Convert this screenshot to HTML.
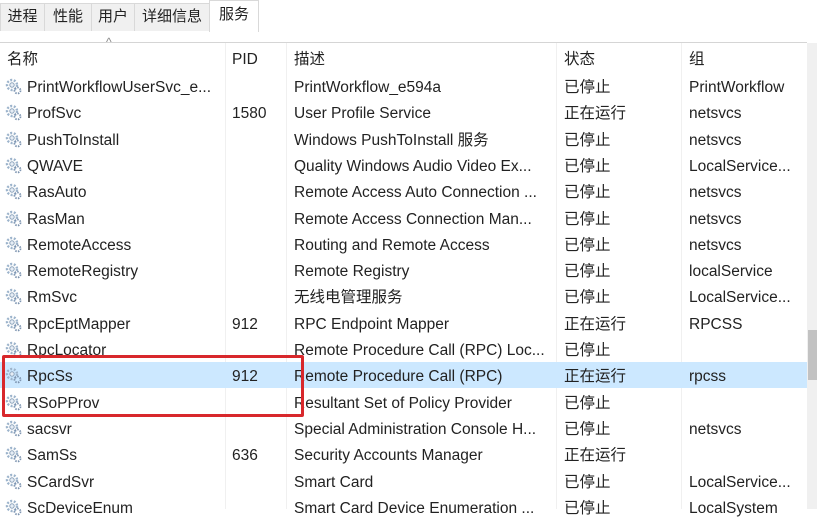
<!DOCTYPE html>
<html><head><meta charset="utf-8"><style>
body{margin:0;width:817px;height:509px;overflow:hidden;background:#fff;font-family:"Liberation Sans","Noto Sans CJK SC",sans-serif;color:#222;position:relative;font-size:15.5px}
.a{position:absolute;white-space:nowrap;height:26px;line-height:26px}
.tabs{position:absolute;left:0;top:0;width:817px;height:31px;background:#fff}
.tab{position:absolute;top:3px;height:27px;background:#f0f0f0;border:1px solid #d9d9d9;border-bottom:none;font-size:15px;line-height:25px;text-align:center;color:#222}
.hdr{position:absolute;left:0;top:42px;width:807px;height:1px;background:#d5d5d5}
.vl{position:absolute;top:43px;width:1px;height:466px;background:#f0f0f0}
.row{position:absolute;left:0;width:807px;height:26px}
.gear{position:absolute;left:5px;width:17px;height:17px}
.sb{position:absolute;left:807px;top:43px;width:10px;height:466px;background:#f0f0f0}
</style></head><body>
<div class="tabs">
<div class="tab" style="left:0;width:43px">进程</div>
<div class="tab" style="left:44px;width:46px">性能</div>
<div class="tab" style="left:91px;width:42px">用户</div>
<div class="tab" style="left:134px;width:74px">详细信息</div>
<div class="tab" style="left:209px;width:48px;top:0;height:31px;background:#fff;line-height:28px">服务</div>
</div>
<div class="a" style="left:106px;top:35px;font-size:12px;color:#888;height:14px;line-height:14px">^</div>
<div class="hdr"></div>
<div class="vl" style="left:225px"></div>
<div class="vl" style="left:286px"></div>
<div class="vl" style="left:556px"></div>
<div class="vl" style="left:681px"></div>
<div class="a" style="left:7px;top:47px">名称</div>
<div class="a" style="left:232px;top:47px">PID</div>
<div class="a" style="left:294px;top:47px">描述</div>
<div class="a" style="left:564px;top:47px">状态</div>
<div class="a" style="left:689px;top:47px">组</div>
<div class="row" style="top:362px;background:#cce8ff"></div>
<div id="rows"></div>
<div class="sb"><div style="position:absolute;left:1px;top:287px;width:9px;height:50px;background:#c2c2c2"></div></div>
<div class="a" style="left:2px;top:355px;width:296px;height:56px;border:3px solid #d8282c;border-radius:2px"></div>
<script>
var d=[
["PrintWorkflowUserSvc_e...","","PrintWorkflow_e594a","已停止","PrintWorkflow"],
["ProfSvc","1580","User Profile Service","正在运行","netsvcs"],
["PushToInstall","","Windows PushToInstall 服务","已停止","netsvcs"],
["QWAVE","","Quality Windows Audio Video Ex...","已停止","LocalService..."],
["RasAuto","","Remote Access Auto Connection ...","已停止","netsvcs"],
["RasMan","","Remote Access Connection Man...","已停止","netsvcs"],
["RemoteAccess","","Routing and Remote Access","已停止","netsvcs"],
["RemoteRegistry","","Remote Registry","已停止","localService"],
["RmSvc","","无线电管理服务","已停止","LocalService..."],
["RpcEptMapper","912","RPC Endpoint Mapper","正在运行","RPCSS"],
["RpcLocator","","Remote Procedure Call (RPC) Loc...","已停止",""],
["RpcSs","912","Remote Procedure Call (RPC)","正在运行","rpcss"],
["RSoPProv","","Resultant Set of Policy Provider","已停止",""],
["sacsvr","","Special Administration Console H...","已停止","netsvcs"],
["SamSs","636","Security Accounts Manager","正在运行",""],
["SCardSvr","","Smart Card","已停止","LocalService..."],
["ScDeviceEnum","","Smart Card Device Enumeration ...","已停止","LocalSystem"]];
var g='<svg class="gear" viewBox="0 0 17 17"><circle cx="7" cy="7" r="5" fill="none" stroke="#9db4cc" stroke-width="2.4" stroke-dasharray="2 1.6"/><circle cx="7" cy="7" r="2.2" fill="#e6edf5" stroke="#8ca3bb"/><circle cx="12.5" cy="12.5" r="3" fill="none" stroke="#7d94b0" stroke-width="1.8" stroke-dasharray="1.5 1.2"/></svg>';
var h='';
d.forEach(function(r,i){var y=75+i*26.3;
h+='<div style="position:absolute;top:'+(y+3)+'px;left:0">'+g+'</div>';
h+='<div class="a" style="left:27px;top:'+y+'px">'+r[0]+'</div>';
h+='<div class="a" style="left:232px;top:'+y+'px">'+r[1]+'</div>';
h+='<div class="a" style="left:294px;top:'+y+'px">'+r[2]+'</div>';
h+='<div class="a" style="left:564px;top:'+y+'px">'+r[3]+'</div>';
h+='<div class="a" style="left:689px;top:'+y+'px">'+r[4]+'</div>';});
document.getElementById('rows').innerHTML=h;
</script>
</body></html>
